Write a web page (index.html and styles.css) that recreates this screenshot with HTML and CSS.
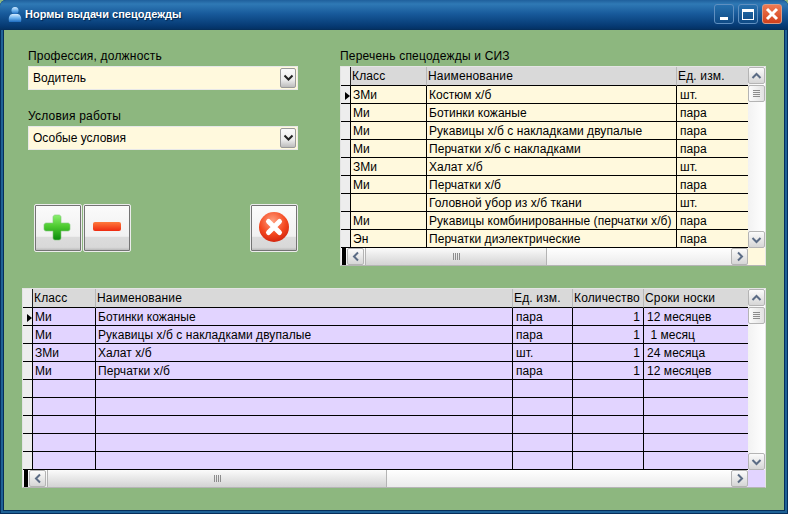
FILE: index.html
```html
<!DOCTYPE html>
<html lang="ru">
  <head>
    <meta charset="UTF-8" />
    <title>Нормы выдачи спецодежды</title>
    <link rel="stylesheet" href="styles.css">
  </head>
  <body>
    <div class="window">
      <div class="titlebar">
        <svg class="app-icon" width="14" height="17" viewBox="0 0 14 17">
          <defs>
            <linearGradient id="person" x1="0" y1="0" x2="0" y2="1">
              <stop offset="0" stop-color="#d5ecff" />
              <stop offset="0.5" stop-color="#6db2ee" />
              <stop offset="1" stop-color="#1e6cc0" />
            </linearGradient>
          </defs>
          <circle cx="7" cy="4.5" r="3.5" fill="url(#person)" />
          <path d="M1 16c-1-5 1-8 3.500-8h5c2.500 0 4.500 3 3.500 8z" fill="url(#person)" />
        </svg>
        <span class="title">Нормы выдачи спецодежды</span>
        <div class="caption-buttons">
          <button class="cap-btn"><span class="cap-min"></span></button>
          <button class="cap-btn"><span class="cap-max"></span></button>
          <button class="cap-btn cap-close">
            <svg width="14" height="14" viewBox="0 0 14 14"><path d="M2 2l10 10M12 2L2 12" stroke="#fff" stroke-width="3" /></svg>
          </button>
        </div>
      </div>

      <div class="client">
        <div class="top">
          <div class="left-panel">
            <label class="field-label">Профессия, должность</label>
            <div class="combo">
              <span class="combo-text">Водитель</span>
              <span class="combo-btn"><svg width="11" height="8" viewBox="0 0 11 8"><path d="M1.500 1.500l4 4 4-4" class="chev-dark" /></svg></span>
            </div>
            <label class="field-label second">Условия работы</label>
            <div class="combo">
              <span class="combo-text">Особые условия</span>
              <span class="combo-btn"><svg width="11" height="8" viewBox="0 0 11 8"><path d="M1.500 1.500l4 4 4-4" class="chev-dark" /></svg></span>
            </div>
            <div class="actions">
              <div class="action-group">
                <button class="tool-btn">
                  <svg width="30" height="30" viewBox="0 0 30 30">
                    <defs>
                      <linearGradient id="plus" x1="0" y1="0" x2="0" y2="1">
                        <stop offset="0" stop-color="#8cf070" />
                        <stop offset="0.45" stop-color="#4ecb30" />
                        <stop offset="1" stop-color="#0a8a0c" />
                      </linearGradient>
                    </defs>
                    <path d="M12 3c-1 0-2 1-2 2v6H3c-1 0-2 1-2 2v4c0 1 1 2 2 2h7v7c0 1 1 2 2 2h4c1 0 2-1 2-2v-7h7c1 0 2-1 2-2v-4c0-1-1-2-2-2h-7V5c0-1-1-2-2-2z" fill="url(#plus)" stroke="#7fc87a" stroke-width="0.600" />
                  </svg>
                </button>
                <button class="tool-btn">
                  <svg width="30" height="30" viewBox="0 0 30 30">
                    <defs>
                      <linearGradient id="minus" x1="0" y1="0" x2="0" y2="1">
                        <stop offset="0" stop-color="#ff7a3c" />
                        <stop offset="1" stop-color="#ee2a10" />
                      </linearGradient>
                    </defs>
                    <rect x="1" y="10" width="28" height="9" rx="2" fill="url(#minus)" />
                  </svg>
                </button>
              </div>
              <button class="tool-btn">
                <svg width="32" height="32" viewBox="0 0 32 32">
                  <defs>
                    <radialGradient id="cancel" cx="0.45" cy="0.3" r="0.8">
                      <stop offset="0" stop-color="#ffa080" />
                      <stop offset="0.55" stop-color="#f4481f" />
                      <stop offset="1" stop-color="#c81a08" />
                    </radialGradient>
                  </defs>
                  <circle cx="16" cy="16" r="15" fill="url(#cancel)" />
                  <path d="M10.500 10.500l11 11M21.500 10.500l-11 11" stroke="#fff" stroke-width="5" stroke-linecap="round" />
                </svg>
              </button>
            </div>
          </div>

          <div class="right-panel">
            <label class="field-label">Перечень спецодежды и СИЗ</label>
            <div class="data-grid yellow">
              <table class="grid-table">
                <colgroup>
                  <col class="c-ind" />
                  <col style="width: 76px" />
                  <col style="width: 250px" />
                  <col style="width: 71px" />
                </colgroup>
                <thead>
                  <tr><th></th><th>Класс</th><th>Наименование</th><th>Ед. изм.</th></tr>
                </thead>
                <tbody>
                  <tr><td class="ind current"></td><td>ЗМи</td><td>Костюм х/б</td><td class="wide">шт.</td></tr>
                  <tr><td class="ind"></td><td>Ми</td><td>Ботинки кожаные</td><td class="wide">пара</td></tr>
                  <tr><td class="ind"></td><td>Ми</td><td>Рукавицы х/б с накладками двупалые</td><td class="wide">пара</td></tr>
                  <tr><td class="ind"></td><td>Ми</td><td>Перчатки х/б с накладками</td><td class="wide">пара</td></tr>
                  <tr><td class="ind"></td><td>ЗМи</td><td>Халат х/б</td><td class="wide">шт.</td></tr>
                  <tr><td class="ind"></td><td>Ми</td><td>Перчатки х/б</td><td class="wide">пара</td></tr>
                  <tr><td class="ind"></td><td></td><td>Головной убор из х/б ткани</td><td class="wide">шт.</td></tr>
                  <tr><td class="ind"></td><td>Ми</td><td>Рукавицы комбинированные (перчатки х/б)</td><td class="wide">пара</td></tr>
                  <tr><td class="ind"></td><td>Эн</td><td>Перчатки диэлектрические</td><td class="wide">пара</td></tr>
                </tbody>
              </table>
              <div class="vscroll">
                <span class="sb-btn"><svg width="11" height="8" viewBox="0 0 11 8"><path d="M1.500 6l4-4 4 4" class="chev" /></svg></span>
                <span class="sb-thumb-v"></span>
                <span class="sb-btn push-end"><svg width="11" height="8" viewBox="0 0 11 8"><path d="M1.500 2l4 4 4-4" class="chev" /></svg></span>
              </div>
              <div class="hscroll">
                <span class="sb-mark"></span>
                <span class="sb-btn"><svg width="8" height="11" viewBox="0 0 8 11"><path d="M6 1.500l-4 4 4 4" class="chev" /></svg></span>
                <span class="sb-thumb-h" style="width: 182px"><i></i></span>
                <span class="sb-btn push-end"><svg width="8" height="11" viewBox="0 0 8 11"><path d="M2 1.500l4 4-4 4" class="chev" /></svg></span>
              </div>
              <div class="corner"></div>
            </div>
          </div>
        </div>

        <div class="data-grid lilac bottom-grid">
          <table class="grid-table">
            <colgroup>
              <col class="c-ind" />
              <col style="width: 63px" />
              <col style="width: 417px" />
              <col style="width: 60px" />
              <col style="width: 71px" />
              <col style="width: 104px" />
            </colgroup>
            <thead>
              <tr><th></th><th>Класс</th><th>Наименование</th><th>Ед. изм.</th><th>Количество</th><th>Сроки носки</th></tr>
            </thead>
            <tbody>
              <tr><td class="ind current"></td><td>Ми</td><td>Ботинки кожаные</td><td class="wide">пара</td><td class="num">1</td><td class="wide">12 месяцев</td></tr>
              <tr><td class="ind"></td><td>Ми</td><td>Рукавицы х/б с накладками двупалые</td><td class="wide">пара</td><td class="num">1</td><td class="wide pre"> 1 месяц</td></tr>
              <tr><td class="ind"></td><td>ЗМи</td><td>Халат х/б</td><td class="wide">шт.</td><td class="num">1</td><td class="wide">24 месяца</td></tr>
              <tr><td class="ind"></td><td>Ми</td><td>Перчатки х/б</td><td class="wide">пара</td><td class="num">1</td><td class="wide">12 месяцев</td></tr>
              <tr><td class="ind"></td><td></td><td></td><td></td><td></td><td></td></tr>
              <tr><td class="ind"></td><td></td><td></td><td></td><td></td><td></td></tr>
              <tr><td class="ind"></td><td></td><td></td><td></td><td></td><td></td></tr>
              <tr><td class="ind"></td><td></td><td></td><td></td><td></td><td></td></tr>
              <tr><td class="ind"></td><td></td><td></td><td></td><td></td><td></td></tr>
            </tbody>
          </table>
          <div class="vscroll">
            <span class="sb-btn"><svg width="11" height="8" viewBox="0 0 11 8"><path d="M1.500 6l4-4 4 4" class="chev" /></svg></span>
            <span class="sb-thumb-v"></span>
            <span class="sb-btn push-end"><svg width="11" height="8" viewBox="0 0 11 8"><path d="M1.500 2l4 4 4-4" class="chev" /></svg></span>
          </div>
          <div class="hscroll">
            <span class="sb-mark"></span>
            <span class="sb-btn"><svg width="8" height="11" viewBox="0 0 8 11"><path d="M6 1.500l-4 4 4 4" class="chev" /></svg></span>
            <span class="sb-thumb-h" style="width: 340px"><i></i></span>
            <span class="sb-btn push-end"><svg width="8" height="11" viewBox="0 0 8 11"><path d="M2 1.500l4 4-4 4" class="chev" /></svg></span>
          </div>
          <div class="corner"></div>
        </div>
      </div>
    </div>
  </body>
</html>
```

FILE: styles.css
```css
html,
body {
  margin: 0;
  height: 100%;
  background: #8db77f;
}
body {
  font-family: "Liberation Sans", Arial, sans-serif;
  font-size: 12px;
  color: #000;
}
.window {
  box-sizing: border-box;
  width: 788px;
  height: 514px;
  display: flex;
  flex-direction: column;
  background: #1f6296;
  box-shadow: inset 0 0 0 1px #052f5c;
  border-radius: 6px 6px 0 0;
  overflow: hidden;
}

/* title bar */
.titlebar {
  box-sizing: border-box;
  flex: 0 0 30px;
  display: flex;
  align-items: center;
  background: linear-gradient(#1f5f9c 0, #2f79b5 4px, #17599a 14px, #063a73 26px, #04305f 30px);
  padding: 0 6px 2px 8px;
}
.app-icon {
  margin-right: 3px;
}
.title {
  color: #fff;
  font-weight: bold;
  font-size: 11px;
  text-shadow: 1px 1px 1px #02244c;
}
.caption-buttons {
  margin-left: auto;
  display: flex;
  gap: 4px;
}
.cap-btn {
  width: 20px;
  height: 20px;
  padding: 0;
  display: flex;
  align-items: center;
  justify-content: center;
  border: 1px solid #5f8fc0;
  border-radius: 3px;
  background: linear-gradient(#2670ae, #0f4a85);
}
.cap-close {
  border-color: #d99a84;
  background: linear-gradient(#ee7a52, #d2401c);
}
.cap-min {
  width: 8px;
  height: 3px;
  background: #fff;
  margin-top: 8px;
  margin-left: -1px;
}
.cap-max {
  box-sizing: border-box;
  width: 12px;
  height: 11px;
  border: 1px solid #fff;
  border-top-width: 3px;
}

/* client area */
.client {
  flex: 1;
  margin: 0 4px 4px;
  padding: 18px 18px 0;
  background: #8db77f;
  box-shadow: 0 0 0 1px #052f5c;
}
.top {
  display: flex;
  justify-content: space-between;
  padding-left: 6px;
}
.left-panel {
  width: 270px;
}
.right-panel {
  width: 426px;
}
.field-label {
  display: block;
  height: 18px;
  line-height: 16px;
  letter-spacing: 0.2px;
}
.second {
  margin-top: 18px;
}

.combo {
  box-sizing: border-box;
  height: 24px;
  display: flex;
  align-items: center;
  justify-content: space-between;
  border: 1px solid #e8e8e8;
  background: #fff9dd;
  padding-left: 4px;
}
.combo-btn {
  width: 16px;
  height: 20px;
  margin-right: 1px;
  display: flex;
  align-items: center;
  justify-content: center;
  box-sizing: border-box;
  border: 1px solid #9a9a9a;
  border-radius: 2px;
  background: linear-gradient(#fafafa 0, #ececec 60%, #bdbdbd 100%);
}
.chev-dark {
  fill: none;
  stroke: #222;
  stroke-width: 2;
}
.chev {
  fill: none;
  stroke: #5b6c85;
  stroke-width: 2;
}

.actions {
  margin-top: 54px;
  display: flex;
  justify-content: space-between;
  padding-left: 6px;
}
.action-group {
  display: flex;
  gap: 1px;
}
.tool-btn {
  box-sizing: border-box;
  width: 48px;
  height: 48px;
  padding: 0 0 3px;
  display: flex;
  align-items: center;
  justify-content: center;
  border: 1px solid #ececec;
  border-radius: 2px;
  box-shadow: inset 0 0 0 1px #747474;
  background: linear-gradient(#fbfbfb 0, #f1f1f1 68%, #dcdcdc 70%, #d8d8d8 92%, #b0b0b0 100%);
}

/* data grids */
.data-grid {
  box-sizing: border-box;
  display: grid;
  grid-template-columns: 1fr 17px;
  grid-template-rows: 181px 17px;
  height: 200px;
  border: 1px solid #e4e4e4;
  border-bottom-color: #b5b5b5;
}
.bottom-grid {
  margin-top: 22px;
}
.grid-table {
  table-layout: fixed;
  border-collapse: separate;
  border-spacing: 0;
  width: 100%;
}
.c-ind {
  width: 10px;
}
.grid-table th,
.grid-table td {
  box-sizing: border-box;
  height: 18px;
  padding: 0 0 0 2px;
  border-bottom: 1px solid #000;
  border-right: 1px solid #000;
  overflow: hidden;
  white-space: nowrap;
  font-weight: normal;
  text-align: left;
  letter-spacing: 0.05px;
}
.grid-table th {
  height: 19px;
  padding-left: 1px;
  background: #d9d9d9;
  border-right: 1px solid #b8b8b8;
  letter-spacing: 0.15px;
}
.grid-table th:first-child {
  background: #ededed;
  border-right: 1px solid #222;
}
.grid-table th:last-child,
.grid-table td:last-child {
  border-right: 0;
}
.grid-table td.ind {
  padding: 0;
  background: #ededed;
  position: relative;
}
.grid-table td.wide {
  padding-left: 3px;
}
.current::after {
  content: "";
  position: absolute;
  right: 0;
  top: 6px;
  border-left: 5px solid #000;
  border-top: 4px solid transparent;
  border-bottom: 4px solid transparent;
}
.grid-table .num {
  text-align: right;
  padding-right: 3px;
}
.grid-table .pre {
  white-space: pre;
}
.yellow td {
  background: #fff9dd;
}
.lilac td {
  background: #e2d4ff;
}
.yellow .corner {
  background: #fff9dd;
}
.lilac .corner {
  background: #e2d4ff;
}

/* scrollbars */
.vscroll {
  display: flex;
  flex-direction: column;
  background: linear-gradient(90deg, #f2f2f2, #fff);
}
.hscroll {
  display: flex;
  background: linear-gradient(#ffffff, #ebebeb);
  overflow: hidden;
}
.sb-btn {
  box-sizing: border-box;
  flex: 0 0 auto;
  width: 17px;
  height: 17px;
  display: flex;
  align-items: center;
  justify-content: center;
  border: 1px solid #b4b4b4;
  border-radius: 2px;
  background: linear-gradient(#fbfbfb, #d6d6d6);
}
.push-end {
  margin-left: auto;
}
.vscroll .push-end {
  margin-top: auto;
  margin-left: 0;
}
.sb-thumb-v {
  box-sizing: border-box;
  height: 17px;
  margin-top: 1px;
  border: 1px solid #b4b4b4;
  border-radius: 2px;
  background:
    repeating-linear-gradient(#8c8c8c 0 1px, transparent 1px 2px) center / 7px 7px no-repeat,
    linear-gradient(90deg, #fbfbfb, #e2e2e2);
}
.sb-mark {
  flex: 0 0 auto;
  width: 4px;
  margin: 0 1px;
  background: #000;
}
.sb-thumb-h {
  box-sizing: border-box;
  margin-left: 1px;
  display: flex;
  align-items: center;
  justify-content: center;
  border-left: 1px solid #b4b4b4;
  border-right: 1px solid #b4b4b4;
  background: linear-gradient(#fbfbfb, #d3d3d3);
}
.sb-thumb-h i {
  width: 7px;
  height: 7px;
  background: repeating-linear-gradient(90deg, #8c8c8c 0 1px, transparent 1px 2px);
}
```
